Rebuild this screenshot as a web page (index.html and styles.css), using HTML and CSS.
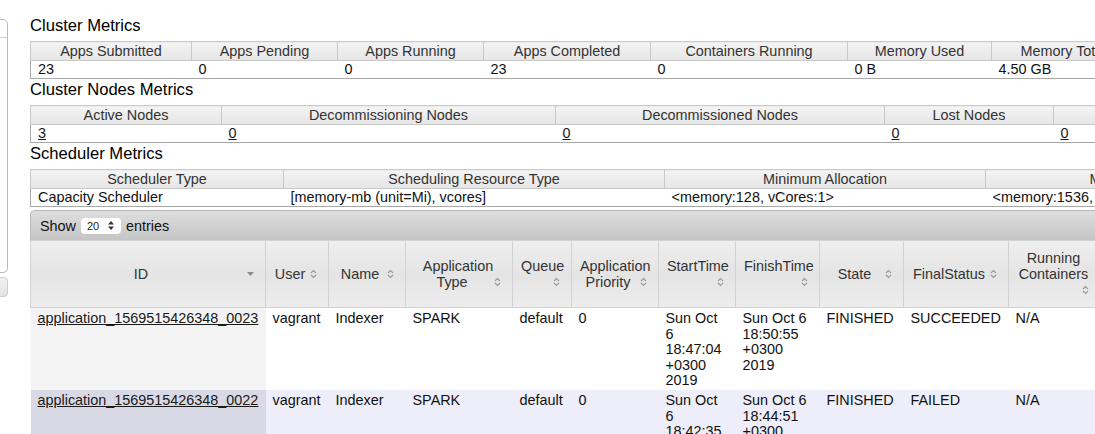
FILE: index.html
```html
<!DOCTYPE html>
<html>
<head>
<meta charset="utf-8">
<title>All Applications</title>
<link rel="stylesheet" href="styles.css">
</head>
<body>
<div class="page">
  <aside class="nav">
    <div class="nav-box"><div class="nav-head"></div></div>
    <div class="nav-tools"></div>
  </aside>
  <main class="content">
    <h3>Cluster Metrics</h3>
    <table class="metrics metrics-cluster">
      <colgroup><col style="width:161px"><col style="width:146px"><col style="width:146px"><col style="width:167px"><col style="width:197px"><col style="width:144px"><col style="width:144px"><col style="width:150px"><col style="width:150px"><col style="width:150px"><col style="width:150px"></colgroup>
      <thead><tr><th>Apps Submitted</th><th>Apps Pending</th><th>Apps Running</th><th>Apps Completed</th><th>Containers Running</th><th>Memory Used</th><th>Memory Total</th><th>Memory Reserved</th><th>VCores Used</th><th>VCores Total</th><th>VCores Reserved</th></tr></thead>
      <tbody><tr><td>23</td><td>0</td><td>0</td><td>23</td><td>0</td><td>0 B</td><td>4.50 GB</td><td>0 B</td><td>0</td><td>3</td><td>0</td></tr></tbody>
    </table>
    <h3>Cluster Nodes Metrics</h3>
    <table class="metrics metrics-nodes">
      <colgroup><col style="width:191px"><col style="width:334px"><col style="width:329px"><col style="width:169px"><col style="width:210px"><col style="width:150px"><col style="width:150px"></colgroup>
      <thead><tr><th>Active Nodes</th><th>Decommissioning Nodes</th><th>Decommissioned Nodes</th><th>Lost Nodes</th><th>Unhealthy Nodes</th><th>Rebooted Nodes</th><th>Shutdown Nodes</th></tr></thead>
      <tbody><tr><td><a href="#">3</a></td><td><a href="#">0</a></td><td><a href="#">0</a></td><td><a href="#">0</a></td><td><a href="#">0</a></td><td><a href="#">0</a></td><td><a href="#">0</a></td></tr></tbody>
    </table>
    <h3>Scheduler Metrics</h3>
    <table class="metrics metrics-scheduler">
      <colgroup><col style="width:253px"><col style="width:381px"><col style="width:321px"><col style="width:336px"><col style="width:300px"></colgroup>
      <thead><tr><th>Scheduler Type</th><th>Scheduling Resource Type</th><th>Minimum Allocation</th><th>Maximum Allocation</th><th>Maximum Cluster Application Priority</th></tr></thead>
      <tbody><tr><td>Capacity Scheduler</td><td>[memory-mb (unit=Mi), vcores]</td><td>&lt;memory:128, vCores:1&gt;</td><td>&lt;memory:1536, vCores:4&gt;</td><td>0</td></tr></tbody>
    </table>
    <div class="dt-wrapper">
      <div class="dt-bar">Show <span class="select"><span>20</span><svg width="6" height="9" viewBox="0 0 6 9"><polygon points="0,3.6 3,0 6,3.6" fill="#333"/><polygon points="0,5.4 3,9 6,5.4" fill="#333"/></svg></span> entries</div>
      <table class="apps">
        <colgroup><col style="width:235px"><col style="width:63px"><col style="width:77px"><col style="width:107px"><col style="width:59px"><col style="width:87px"><col style="width:77px"><col style="width:84px"><col style="width:84px"><col style="width:105px"><col style="width:92px"><col style="width:100px"><col style="width:100px"></colgroup>
        <thead>
          <tr>
            <th>ID<span class="sort"><svg width="9" height="10" viewBox="0 0 9 10"><polygon points="1,3 8,3 4.5,7" fill="#8a8a8a"/></svg></span></th>
            <th>User<span class="sort"><svg width="9" height="10" viewBox="0 0 9 10"><path d="M2 4 L4.5 1.5 L7 4 M2 6 L4.5 8.5 L7 6" fill="none" stroke="#999" stroke-width="1.1"/></svg></span></th>
            <th>Name<span class="sort"><svg width="9" height="10" viewBox="0 0 9 10"><path d="M2 4 L4.5 1.5 L7 4 M2 6 L4.5 8.5 L7 6" fill="none" stroke="#999" stroke-width="1.1"/></svg></span></th>
            <th>Application Type<span class="sort"><svg width="9" height="10" viewBox="0 0 9 10"><path d="M2 4 L4.5 1.5 L7 4 M2 6 L4.5 8.5 L7 6" fill="none" stroke="#999" stroke-width="1.1"/></svg></span></th>
            <th>Queue<span class="sort"><svg width="9" height="10" viewBox="0 0 9 10"><path d="M2 4 L4.5 1.5 L7 4 M2 6 L4.5 8.5 L7 6" fill="none" stroke="#999" stroke-width="1.1"/></svg></span></th>
            <th>Application Priority<span class="sort"><svg width="9" height="10" viewBox="0 0 9 10"><path d="M2 4 L4.5 1.5 L7 4 M2 6 L4.5 8.5 L7 6" fill="none" stroke="#999" stroke-width="1.1"/></svg></span></th>
            <th>StartTime<span class="sort"><svg width="9" height="10" viewBox="0 0 9 10"><path d="M2 4 L4.5 1.5 L7 4 M2 6 L4.5 8.5 L7 6" fill="none" stroke="#999" stroke-width="1.1"/></svg></span></th>
            <th>FinishTime<span class="sort"><svg width="9" height="10" viewBox="0 0 9 10"><path d="M2 4 L4.5 1.5 L7 4 M2 6 L4.5 8.5 L7 6" fill="none" stroke="#999" stroke-width="1.1"/></svg></span></th>
            <th>State<span class="sort"><svg width="9" height="10" viewBox="0 0 9 10"><path d="M2 4 L4.5 1.5 L7 4 M2 6 L4.5 8.5 L7 6" fill="none" stroke="#999" stroke-width="1.1"/></svg></span></th>
            <th>FinalStatus<span class="sort"><svg width="9" height="10" viewBox="0 0 9 10"><path d="M2 4 L4.5 1.5 L7 4 M2 6 L4.5 8.5 L7 6" fill="none" stroke="#999" stroke-width="1.1"/></svg></span></th>
            <th>Running Containers<span class="sort"><svg width="9" height="10" viewBox="0 0 9 10"><path d="M2 4 L4.5 1.5 L7 4 M2 6 L4.5 8.5 L7 6" fill="none" stroke="#999" stroke-width="1.1"/></svg></span></th>
            <th>Allocated CPU VCores<span class="sort"><svg width="9" height="10" viewBox="0 0 9 10"><path d="M2 4 L4.5 1.5 L7 4 M2 6 L4.5 8.5 L7 6" fill="none" stroke="#999" stroke-width="1.1"/></svg></span></th>
            <th>Allocated Memory MB<span class="sort"><svg width="9" height="10" viewBox="0 0 9 10"><path d="M2 4 L4.5 1.5 L7 4 M2 6 L4.5 8.5 L7 6" fill="none" stroke="#999" stroke-width="1.1"/></svg></span></th>
          </tr>
        </thead>
        <tbody>
          <tr class="even">
            <td class="sorted"><a href="#">application_1569515426348_0023</a></td>
            <td>vagrant</td><td>Indexer</td><td>SPARK</td><td>default</td><td>0</td>
            <td>Sun Oct 6 18:47:04 +0300 2019</td><td>Sun Oct 6 18:50:55 +0300 2019</td>
            <td>FINISHED</td><td>SUCCEEDED</td><td>N/A</td><td>N/A</td><td>N/A</td>
          </tr>
          <tr class="odd">
            <td class="sorted"><a href="#">application_1569515426348_0022</a></td>
            <td>vagrant</td><td>Indexer</td><td>SPARK</td><td>default</td><td>0</td>
            <td>Sun Oct 6 18:42:35 +0300 2019</td><td>Sun Oct 6 18:44:51 +0300 2019</td>
            <td>FINISHED</td><td>FAILED</td><td>N/A</td><td>N/A</td><td>N/A</td>
          </tr>
        </tbody>
      </table>
    </div>
  </main>
</div>
</body>
</html>
```

FILE: styles.css
```css
html, body {
  margin: 0;
  padding: 0;
}
body {
  width: 1095px;
  height: 434px;
  overflow: hidden;
  background: #fff;
  color: #111;
  font-family: "Liberation Sans", Arial, Helvetica, sans-serif;
  font-size: 14.4px;
}
.page {
  display: flex;
  align-items: flex-start;
}
.nav {
  flex: 0 0 200px;
  margin-left: -192px;
  padding-top: 19px;
}
.nav-box {
  height: 252px;
  border: 1px solid #b9b9b9;
  border-radius: 5px;
  background: #fff;
}
.nav-head {
  height: 17px;
  border-bottom: 1px solid #cfcfcf;
}
.nav-tools {
  margin-top: 4px;
  height: 18px;
  border: 1px solid #cccccc;
  border-radius: 4px;
  background: linear-gradient(#f2f2f2, #e2e2e2);
}
.content {
  flex: 0 0 1800px;
  margin-left: 22px;
  padding-top: 16px;
}
h3 {
  margin: 0 0 6px;
  font-size: 16.6px;
  line-height: 19px;
  font-weight: normal;
  color: #000;
}
a {
  color: #1a1a1a;
  text-decoration: underline;
}
.metrics {
  border-collapse: collapse;
  table-layout: fixed;
  margin-bottom: 1px;
}
.metrics-cluster {
  width: 1705px;
}
.metrics-nodes {
  width: 1533px;
}
.metrics-scheduler {
  width: 1591px;
}
.metrics th {
  height: 18px;
  padding: 0;
  line-height: 18px;
  font-weight: normal;
  color: #333;
  text-align: center;
  white-space: nowrap;
  overflow: hidden;
  border: 1px solid #c9c9c9;
  background: linear-gradient(#f4f4f4, #e5e5e5);
}
.metrics td {
  padding: 0 7px;
  line-height: 17px;
  white-space: nowrap;
  overflow: hidden;
  border-bottom: 1px solid #a8a8a8;
  color: #111;
}
.metrics td:first-child {
  border-left: 1px solid #a8a8a8;
}
.dt-wrapper {
  margin-top: 3px;
  width: 1270px;
}
.dt-bar {
  display: flex;
  align-items: center;
  height: 29px;
  padding-left: 9px;
  border-top: 1px solid #b9b9b9;
  border-left: 1px solid #b9b9b9;
  border-top-left-radius: 5px;
  background: linear-gradient(#dedede, #c5c5c5);
  color: #111;
}
.select {
  display: inline-flex;
  align-items: center;
  justify-content: space-between;
  box-sizing: border-box;
  width: 40px;
  height: 16px;
  margin: 0 5px;
  padding: 0 7px 0 6px;
  border-radius: 4px;
  background: #fff;
  font-size: 11px;
  color: #222;
}
.apps {
  width: 1270px;
  border-collapse: collapse;
  table-layout: fixed;
}
.apps th {
  padding: 9px 10px 9px 8px;
  line-height: 16px;
  font-weight: normal;
  color: #333;
  text-align: center;
  vertical-align: middle;
  border: 1px solid #d2d2d2;
  background: linear-gradient(#eeeeee, #e4e4e4 50%, #ededed);
}
.sort {
  float: right;
  display: flex;
  align-items: center;
  width: 9px;
  height: 16px;
  margin-left: 3px;
}
.apps td {
  padding: 3px 8px 1px 7px;
  line-height: 15.6px;
  vertical-align: top;
  color: #111;
}
.apps tr.even td {
  background: #ffffff;
}
.apps tr.even td.sorted {
  background: #f3f3f3;
}
.apps tr.odd td {
  background: #eeeefa;
}
.apps tr.odd td.sorted {
  background: #d9d9e6;
}
```
